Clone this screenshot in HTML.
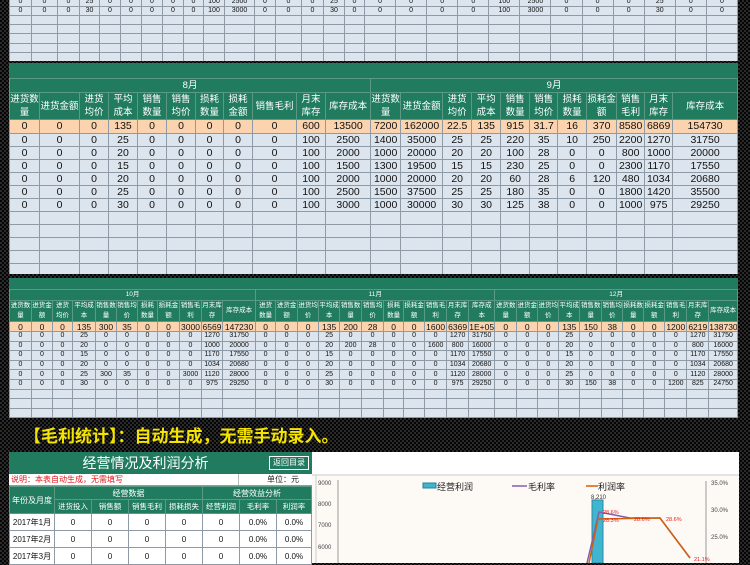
<!DOCTYPE html>
<html><head><meta charset="utf-8"><style>
*{margin:0;padding:0;box-sizing:border-box}
body{width:750px;height:563px;overflow:hidden;position:relative;background:repeating-conic-gradient(#2a2a2a 0 25%,#050505 0 50%) 0 0/4px 4px;font-family:"Liberation Sans","Noto Sans CJK SC",sans-serif}
.sec{position:absolute;left:9px;background:#dce5ee;overflow:hidden}
.band{position:absolute;top:0;left:0;right:0;background:#207b5f}
table{border-collapse:collapse;table-layout:fixed;width:100%}
td{border:1px solid #8e9aa6;text-align:center;overflow:hidden;white-space:nowrap;color:#111;background:#dce5ee;padding:0}
.g td,td.g{background:#207b5f;color:#fff;border-color:#5a9a82}
.o td{background:#fbd3af}
.s2 td{font-size:10.5px;line-height:11px}
.s2 tr.d{height:13px}
.s2 .g td{font-size:9.5px;line-height:13px;white-space:normal}
.s3 td{font-size:7px;line-height:8px}
.s3 .g td{font-size:6.5px;line-height:10px;white-space:normal}
.s3 .o td{font-size:8.5px}
.w td{background:#fff;font-size:8px}
</style></head><body>

<!-- top section -->
<div class="sec s3" style="top:-3px;width:729px;height:64px">
<table>
<colgroup><col style="width:22px"><col style="width:26px"><col style="width:22px"><col style="width:20px"><col style="width:21px"><col style="width:21px"><col style="width:21px"><col style="width:21px"><col style="width:20px"><col style="width:21px"><col style="width:30px"><col style="width:21px"><col style="width:26px"><col style="width:22px"><col style="width:21px"><col style="width:20px"><col><col><col><col><col><col><col><col><col><col><col><col></colgroup>
<tr style="height:9px"><td>0</td><td>0</td><td>0</td><td>25</td><td>0</td><td>0</td><td>0</td><td>0</td><td>0</td><td>100</td><td>2500</td><td>0</td><td>0</td><td>0</td><td>25</td><td>0</td><td>0</td><td>0</td><td>0</td><td>0</td><td>100</td><td>2500</td><td>0</td><td>0</td><td>0</td><td>25</td><td>0</td><td>0</td></tr>
<tr style="height:9px"><td>0</td><td>0</td><td>0</td><td>30</td><td>0</td><td>0</td><td>0</td><td>0</td><td>0</td><td>100</td><td>3000</td><td>0</td><td>0</td><td>0</td><td>30</td><td>0</td><td>0</td><td>0</td><td>0</td><td>0</td><td>100</td><td>3000</td><td>0</td><td>0</td><td>0</td><td>30</td><td>0</td><td>0</td></tr>
<tr style="height:9px"><td></td><td></td><td></td><td></td><td></td><td></td><td></td><td></td><td></td><td></td><td></td><td></td><td></td><td></td><td></td><td></td><td></td><td></td><td></td><td></td><td></td><td></td><td></td><td></td><td></td><td></td><td></td><td></td></tr>
<tr style="height:9px"><td></td><td></td><td></td><td></td><td></td><td></td><td></td><td></td><td></td><td></td><td></td><td></td><td></td><td></td><td></td><td></td><td></td><td></td><td></td><td></td><td></td><td></td><td></td><td></td><td></td><td></td><td></td><td></td></tr>
<tr style="height:10px"><td></td><td></td><td></td><td></td><td></td><td></td><td></td><td></td><td></td><td></td><td></td><td></td><td></td><td></td><td></td><td></td><td></td><td></td><td></td><td></td><td></td><td></td><td></td><td></td><td></td><td></td><td></td><td></td></tr>
<tr style="height:9px"><td></td><td></td><td></td><td></td><td></td><td></td><td></td><td></td><td></td><td></td><td></td><td></td><td></td><td></td><td></td><td></td><td></td><td></td><td></td><td></td><td></td><td></td><td></td><td></td><td></td><td></td><td></td><td></td></tr>
<tr style="height:9px"><td></td><td></td><td></td><td></td><td></td><td></td><td></td><td></td><td></td><td></td><td></td><td></td><td></td><td></td><td></td><td></td><td></td><td></td><td></td><td></td><td></td><td></td><td></td><td></td><td></td><td></td><td></td><td></td></tr>
</table></div>

<!-- section 2: 8月 9月 -->
<div class="sec s2" style="top:63px;width:729px;height:211px;padding-top:15px">
<div class="band" style="height:15px"></div>
<table>
<colgroup><col style="width:30px"><col style="width:40px"><col style="width:29px"><col style="width:29px"><col style="width:29px"><col style="width:29px"><col style="width:28px"><col style="width:29px"><col style="width:44px"><col style="width:29px"><col style="width:45px"><col style="width:30px"><col style="width:42px"><col style="width:29px"><col style="width:29px"><col style="width:29px"><col style="width:28px"><col style="width:29px"><col style="width:30px"><col style="width:28px"><col style="width:28px"><col></colgroup>
<tr class="g" style="height:14px"><td colspan="11">8月</td><td colspan="11">9月</td></tr>
<tr class="g" style="height:27px"><td>进货数量</td><td>进货金额</td><td>进货均价</td><td>平均成本</td><td>销售数量</td><td>销售均价</td><td>损耗数量</td><td>损耗金额</td><td>销售毛利</td><td>月末库存</td><td>库存成本</td><td>进货数量</td><td>进货金额</td><td>进货均价</td><td>平均成本</td><td>销售数量</td><td>销售均价</td><td>损耗数量</td><td>损耗金额</td><td>销售毛利</td><td>月末库存</td><td>库存成本</td></tr>
<tr class="o" style="height:14px"><td>0</td><td>0</td><td>0</td><td>135</td><td>0</td><td>0</td><td>0</td><td>0</td><td>0</td><td>600</td><td>13500</td><td>7200</td><td>162000</td><td>22.5</td><td>135</td><td>915</td><td>31.7</td><td>16</td><td>370</td><td>8580</td><td>6869</td><td>154730</td></tr>
<tr class="d"><td>0</td><td>0</td><td>0</td><td>25</td><td>0</td><td>0</td><td>0</td><td>0</td><td>0</td><td>100</td><td>2500</td><td>1400</td><td>35000</td><td>25</td><td>25</td><td>220</td><td>35</td><td>10</td><td>250</td><td>2200</td><td>1270</td><td>31750</td></tr>
<tr class="d"><td>0</td><td>0</td><td>0</td><td>20</td><td>0</td><td>0</td><td>0</td><td>0</td><td>0</td><td>100</td><td>2000</td><td>1000</td><td>20000</td><td>20</td><td>20</td><td>100</td><td>28</td><td>0</td><td>0</td><td>800</td><td>1000</td><td>20000</td></tr>
<tr class="d"><td>0</td><td>0</td><td>0</td><td>15</td><td>0</td><td>0</td><td>0</td><td>0</td><td>0</td><td>100</td><td>1500</td><td>1300</td><td>19500</td><td>15</td><td>15</td><td>230</td><td>25</td><td>0</td><td>0</td><td>2300</td><td>1170</td><td>17550</td></tr>
<tr class="d"><td>0</td><td>0</td><td>0</td><td>20</td><td>0</td><td>0</td><td>0</td><td>0</td><td>0</td><td>100</td><td>2000</td><td>1000</td><td>20000</td><td>20</td><td>20</td><td>60</td><td>28</td><td>6</td><td>120</td><td>480</td><td>1034</td><td>20680</td></tr>
<tr class="d"><td>0</td><td>0</td><td>0</td><td>25</td><td>0</td><td>0</td><td>0</td><td>0</td><td>0</td><td>100</td><td>2500</td><td>1500</td><td>37500</td><td>25</td><td>25</td><td>180</td><td>35</td><td>0</td><td>0</td><td>1800</td><td>1420</td><td>35500</td></tr>
<tr class="d"><td>0</td><td>0</td><td>0</td><td>30</td><td>0</td><td>0</td><td>0</td><td>0</td><td>0</td><td>100</td><td>3000</td><td>1000</td><td>30000</td><td>30</td><td>30</td><td>125</td><td>38</td><td>0</td><td>0</td><td>1000</td><td>975</td><td>29250</td></tr>
<tr class="d"><td></td><td></td><td></td><td></td><td></td><td></td><td></td><td></td><td></td><td></td><td></td><td></td><td></td><td></td><td></td><td></td><td></td><td></td><td></td><td></td><td></td><td></td></tr>
<tr class="d"><td></td><td></td><td></td><td></td><td></td><td></td><td></td><td></td><td></td><td></td><td></td><td></td><td></td><td></td><td></td><td></td><td></td><td></td><td></td><td></td><td></td><td></td></tr>
<tr class="d"><td></td><td></td><td></td><td></td><td></td><td></td><td></td><td></td><td></td><td></td><td></td><td></td><td></td><td></td><td></td><td></td><td></td><td></td><td></td><td></td><td></td><td></td></tr>
<tr class="d"><td></td><td></td><td></td><td></td><td></td><td></td><td></td><td></td><td></td><td></td><td></td><td></td><td></td><td></td><td></td><td></td><td></td><td></td><td></td><td></td><td></td><td></td></tr>
<tr class="d"><td></td><td></td><td></td><td></td><td></td><td></td><td></td><td></td><td></td><td></td><td></td><td></td><td></td><td></td><td></td><td></td><td></td><td></td><td></td><td></td><td></td><td></td></tr>
</table></div>

<!-- section 3: 10-12月 -->
<div class="sec s3" style="top:278px;width:729px;height:140px;padding-top:11px">
<div class="band" style="height:11px"></div>
<table>
<colgroup><col style="width:22px"><col style="width:21px"><col style="width:20px"><col style="width:23px"><col style="width:21px"><col style="width:21px"><col style="width:20px"><col style="width:22px"><col style="width:22px"><col style="width:21px"><col style="width:33px"><col style="width:20px"><col style="width:22px"><col style="width:21px"><col style="width:21px"><col style="width:22px"><col style="width:22px"><col style="width:20px"><col style="width:21px"><col style="width:22px"><col style="width:22px"><col style="width:26px"><col style="width:22px"><col style="width:21px"><col style="width:21px"><col style="width:21px"><col style="width:22px"><col style="width:21px"><col style="width:21px"><col style="width:21px"><col style="width:22px"><col style="width:22px"><col></colgroup>
<tr class="g" style="height:9px"><td colspan="11">10月</td><td colspan="11">11月</td><td colspan="11">12月</td></tr>
<tr class="g" style="height:21px"><td>进货数量</td><td>进货金额</td><td>进货均价</td><td>平均成本</td><td>销售数量</td><td>销售均价</td><td>损耗数量</td><td>损耗金额</td><td>销售毛利</td><td>月末库存</td><td>库存成本</td><td>进货数量</td><td>进货金额</td><td>进货均价</td><td>平均成本</td><td>销售数量</td><td>销售均价</td><td>损耗数量</td><td>损耗金额</td><td>销售毛利</td><td>月末库存</td><td>库存成本</td><td>进货数量</td><td>进货金额</td><td>进货均价</td><td>平均成本</td><td>销售数量</td><td>销售均价</td><td>损耗数量</td><td>损耗金额</td><td>销售毛利</td><td>月末库存</td><td>库存成本</td></tr>
<tr class="o" style="height:10px"><td>0</td><td>0</td><td>0</td><td>135</td><td>300</td><td>35</td><td>0</td><td>0</td><td>3000</td><td>6569</td><td>147230</td><td>0</td><td>0</td><td>0</td><td>135</td><td>200</td><td>28</td><td>0</td><td>0</td><td>1600</td><td>6369</td><td>1E+05</td><td>0</td><td>0</td><td>0</td><td>135</td><td>150</td><td>38</td><td>0</td><td>0</td><td>1200</td><td>6219</td><td>138730</td></tr>
<tr style="height:9.6px"><td>0</td><td>0</td><td>0</td><td>25</td><td>0</td><td>0</td><td>0</td><td>0</td><td>0</td><td>1270</td><td>31750</td><td>0</td><td>0</td><td>0</td><td>25</td><td>0</td><td>0</td><td>0</td><td>0</td><td>0</td><td>1270</td><td>31750</td><td>0</td><td>0</td><td>0</td><td>25</td><td>0</td><td>0</td><td>0</td><td>0</td><td>0</td><td>1270</td><td>31750</td></tr>
<tr style="height:9.6px"><td>0</td><td>0</td><td>0</td><td>20</td><td>0</td><td>0</td><td>0</td><td>0</td><td>0</td><td>1000</td><td>20000</td><td>0</td><td>0</td><td>0</td><td>20</td><td>200</td><td>28</td><td>0</td><td>0</td><td>1600</td><td>800</td><td>16000</td><td>0</td><td>0</td><td>0</td><td>20</td><td>0</td><td>0</td><td>0</td><td>0</td><td>0</td><td>800</td><td>16000</td></tr>
<tr style="height:9.6px"><td>0</td><td>0</td><td>0</td><td>15</td><td>0</td><td>0</td><td>0</td><td>0</td><td>0</td><td>1170</td><td>17550</td><td>0</td><td>0</td><td>0</td><td>15</td><td>0</td><td>0</td><td>0</td><td>0</td><td>0</td><td>1170</td><td>17550</td><td>0</td><td>0</td><td>0</td><td>15</td><td>0</td><td>0</td><td>0</td><td>0</td><td>0</td><td>1170</td><td>17550</td></tr>
<tr style="height:9.6px"><td>0</td><td>0</td><td>0</td><td>20</td><td>0</td><td>0</td><td>0</td><td>0</td><td>0</td><td>1034</td><td>20680</td><td>0</td><td>0</td><td>0</td><td>20</td><td>0</td><td>0</td><td>0</td><td>0</td><td>0</td><td>1034</td><td>20680</td><td>0</td><td>0</td><td>0</td><td>20</td><td>0</td><td>0</td><td>0</td><td>0</td><td>0</td><td>1034</td><td>20680</td></tr>
<tr style="height:9.6px"><td>0</td><td>0</td><td>0</td><td>25</td><td>300</td><td>35</td><td>0</td><td>0</td><td>3000</td><td>1120</td><td>28000</td><td>0</td><td>0</td><td>0</td><td>25</td><td>0</td><td>0</td><td>0</td><td>0</td><td>0</td><td>1120</td><td>28000</td><td>0</td><td>0</td><td>0</td><td>25</td><td>0</td><td>0</td><td>0</td><td>0</td><td>0</td><td>1120</td><td>28000</td></tr>
<tr style="height:9.6px"><td>0</td><td>0</td><td>0</td><td>30</td><td>0</td><td>0</td><td>0</td><td>0</td><td>0</td><td>975</td><td>29250</td><td>0</td><td>0</td><td>0</td><td>30</td><td>0</td><td>0</td><td>0</td><td>0</td><td>0</td><td>975</td><td>29250</td><td>0</td><td>0</td><td>0</td><td>30</td><td>150</td><td>38</td><td>0</td><td>0</td><td>1200</td><td>825</td><td>24750</td></tr>
<tr style="height:9.6px"><td></td><td></td><td></td><td></td><td></td><td></td><td></td><td></td><td></td><td></td><td></td><td></td><td></td><td></td><td></td><td></td><td></td><td></td><td></td><td></td><td></td><td></td><td></td><td></td><td></td><td></td><td></td><td></td><td></td><td></td><td></td><td></td><td></td></tr>
<tr style="height:9.6px"><td></td><td></td><td></td><td></td><td></td><td></td><td></td><td></td><td></td><td></td><td></td><td></td><td></td><td></td><td></td><td></td><td></td><td></td><td></td><td></td><td></td><td></td><td></td><td></td><td></td><td></td><td></td><td></td><td></td><td></td><td></td><td></td><td></td></tr>
<tr style="height:9.6px"><td></td><td></td><td></td><td></td><td></td><td></td><td></td><td></td><td></td><td></td><td></td><td></td><td></td><td></td><td></td><td></td><td></td><td></td><td></td><td></td><td></td><td></td><td></td><td></td><td></td><td></td><td></td><td></td><td></td><td></td><td></td><td></td><td></td></tr>
</table></div>

<!-- title -->
<div style="position:absolute;left:24px;top:426px;font-size:17px;line-height:22px;color:#f5e400;font-weight:bold;white-space:nowrap">【毛利统计】：自动生成，无需手动录入。</div>

<!-- bottom table -->
<div style="position:absolute;left:9px;top:452px;width:303px;height:111px;background:#fff">
<div style="height:22px;background:#207b5f;color:#fff;font-size:14px;line-height:22px;text-align:center;position:relative;padding-right:30px">经营情况及利润分析
<span style="position:absolute;left:260px;top:4px;width:40px;height:14px;border:1px solid #fff;font-size:8px;line-height:12px;text-align:center">返回目录</span></div>
<div style="height:12px;font-size:8px;line-height:12px;position:relative;border-bottom:1px solid #999"><span style="color:#e01818;padding-left:2px">说明：本表自动生成，无需填写</span><span style="position:absolute;left:229px;top:0;bottom:0;border-left:1px solid #bbb"></span><span style="position:absolute;left:258px;color:#222">单位：元</span></div>
<table>
<colgroup><col style="width:45px"><col style="width:37px"><col style="width:37px"><col style="width:37px"><col style="width:37px"><col style="width:37px"><col style="width:37px"><col></colgroup>
<tr style="height:13px"><td class="g" rowspan="2" style="font-size:8px">年份及月度</td><td class="g" colspan="4" style="font-size:8px">经营数据</td><td class="g" colspan="3" style="font-size:8px">经营效益分析</td></tr>
<tr style="height:14px"><td class="g" style="font-size:7.5px">进货投入</td><td class="g" style="font-size:7.5px">销售额</td><td class="g" style="font-size:7.5px">销售毛利</td><td class="g" style="font-size:7.5px">损耗损失</td><td class="g" style="font-size:7.5px">经营利润</td><td class="g" style="font-size:7.5px">毛利率</td><td class="g" style="font-size:7.5px">利润率</td></tr>
<tr class="w" style="height:17px"><td>2017年1月</td><td>0</td><td>0</td><td>0</td><td>0</td><td>0</td><td>0.0%</td><td>0.0%</td></tr>
<tr class="w" style="height:17px"><td>2017年2月</td><td>0</td><td>0</td><td>0</td><td>0</td><td>0</td><td>0.0%</td><td>0.0%</td></tr>
<tr class="w" style="height:17px"><td>2017年3月</td><td>0</td><td>0</td><td>0</td><td>0</td><td>0</td><td>0.0%</td><td>0.0%</td></tr>
</table></div>

<!-- chart -->
<svg style="position:absolute;left:312px;top:452px" width="427" height="111" viewBox="312 452 427 111" font-family="Liberation Sans, Noto Sans CJK SC, sans-serif">
<rect x="312" y="452" width="427" height="111" fill="#fff"/>
<rect x="312" y="474" width="427" height="89" fill="#fdfaf6"/>
<line x1="312" y1="475" x2="739" y2="475" stroke="#ccc"/>
<line x1="316" y1="475" x2="316" y2="563" stroke="#ccc"/>
<line x1="338" y1="480" x2="338" y2="563" stroke="#999"/>
<g font-size="6" fill="#444"><text x="318" y="485">9000</text><text x="318" y="506">8000</text><text x="318" y="527">7000</text><text x="318" y="549">6000</text>
<text x="711" y="485">35.0%</text><text x="711" y="512">30.0%</text><text x="711" y="539">25.0%</text></g>
<line x1="706" y1="481" x2="706" y2="563" stroke="#999"/>
<rect x="423" y="483" width="13" height="5" fill="#3fb5d0" stroke="#2a7f95"/>
<text x="437" y="490" font-size="9" fill="#222">经营利润</text>
<line x1="512" y1="486" x2="527" y2="486" stroke="#8060b0" stroke-width="1.5"/>
<text x="528" y="490" font-size="9" fill="#222">毛利率</text>
<line x1="586" y1="486" x2="598" y2="486" stroke="#d06010" stroke-width="1.5"/>
<text x="598" y="490" font-size="9" fill="#222">利润率</text>
<text x="591" y="499" font-size="6" fill="#333">8,210</text>
<rect x="592" y="500" width="11" height="63" fill="#3fb5d0" stroke="#2a8aa5"/>
<polyline points="587,563 599,512 630,518 660,518 690,558" fill="none" stroke="#8060b0" stroke-width="1.5"/>
<polyline points="589,563 598,519 660,518 690,558" fill="none" stroke="#d06010" stroke-width="1.5"/>
<g font-size="5.5" fill="#e02020"><text x="603" y="514">28.6%</text><text x="603" y="522">28.3%</text><text x="634" y="521">28.6%</text><text x="666" y="521">28.6%</text><text x="694" y="561">21.1%</text></g>
</svg>
</body></html>
